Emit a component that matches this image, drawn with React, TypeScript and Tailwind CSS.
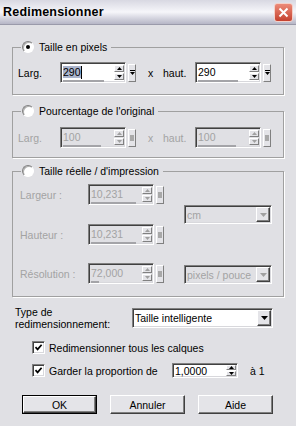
import React from "react";

const sunken =
  "border border-t-[#808080] border-l-[#808080] border-r-white border-b-white shadow-[inset_1px_1px_0_#404040,inset_-1px_-1px_0_#d8d8dc]";
const raised =
  "border border-t-white border-l-white border-r-[#404040] border-b-[#404040] shadow-[inset_-1px_-1px_0_#808080] bg-[#e4e4e8]";
const smallRaised =
  "border border-t-white border-l-white border-r-[#808080] border-b-[#808080] bg-[#e4e4e8]";

function Tri({ up, color }: { up?: boolean; color: string }) {
  return (
    <svg width="5" height="3" viewBox="0 0 5 3">
      <polygon points={up ? "0,3 2.5,0 5,3" : "0,0 5,0 2.5,3"} fill={color} />
    </svg>
  );
}

function Spin({ disabled, h = "h-[7px]" }: { disabled?: boolean; h?: string }) {
  const c = disabled ? "#a0a0a0" : "#000";
  return (
    <div className="mr-[1px] flex w-[10px] flex-col justify-center gap-[1px]">
      <span className={`flex items-center justify-center ${h} ${smallRaised}`}>
        <Tri up color={c} />
      </span>
      <span className={`flex items-center justify-center ${h} ${smallRaised}`}>
        <Tri color={c} />
      </span>
    </div>
  );
}

function SliderBtn({ disabled }: { disabled?: boolean }) {
  return (
    <span className={`flex h-[18px] w-[8px] items-center justify-center ${smallRaised}`}>
      {disabled ? (
        <span className="h-[6px] w-[4px] bg-[#a8a8a8]" />
      ) : (
        <svg width="5" height="6" viewBox="0 0 5 6">
          <rect x="0" y="0" width="5" height="1" fill="#000" />
          <polygon points="0,2 5,2 2.5,5" fill="#000" />
        </svg>
      )}
    </span>
  );
}

function SpinBox({
  value,
  disabled,
  selected,
  bar,
}: {
  value: string;
  disabled?: boolean;
  selected?: boolean;
  bar: string;
}) {
  return (
    <div className="flex items-center gap-[2px]">
      <div
        className={`flex h-[21px] w-[66px] ${sunken} ${
          disabled ? "bg-[#e0e0e4] text-[#a3a3a3]" : "bg-white"
        }`}
      >
        <div className="flex flex-1 flex-col pl-[2px] pt-[1px]">
          <div className="flex flex-1 items-center">
            {selected ? (
              <>
                <span className="bg-[#aab4cc]">{value}</span>
                <span className="h-[13px] w-[1px] bg-black" />
              </>
            ) : (
              <span>{value}</span>
            )}
          </div>
          <div className={`h-[2px] bg-[#a4a4a8] ${bar}`} />
        </div>
        <Spin disabled={disabled} />
      </div>
      <SliderBtn disabled={disabled} />
    </div>
  );
}

function Combo({
  value,
  w,
  h,
  disabled,
}: {
  value: string;
  w: string;
  h: string;
  disabled?: boolean;
}) {
  return (
    <div
      className={`flex ${w} ${h} ${sunken} ${
        disabled ? "bg-[#e0e0e4] text-[#a3a3a3]" : "bg-white"
      }`}
    >
      <span className="flex flex-1 items-center overflow-hidden whitespace-nowrap pl-[2px]">
        {value}
      </span>
      <span className={`my-[1px] mr-[1px] flex w-[14px] items-center justify-center ${raised}`}>
        <svg width="7" height="4" viewBox="0 0 7 4">
          <polygon points="0,0 7,0 3.5,4" fill={disabled ? "#a0a0a0" : "#000"} />
        </svg>
      </span>
    </div>
  );
}

function Radio({ checked }: { checked?: boolean }) {
  return (
    <span className="flex h-[12px] w-[12px] items-center justify-center rounded-full border border-t-[#808080] border-l-[#808080] border-r-white border-b-white bg-white shadow-[inset_1px_1px_0_#b0b0b0]">
      {checked && <span className="h-[4px] w-[4px] rounded-full bg-black" />}
    </span>
  );
}

function Check() {
  return (
    <span className={`flex h-[13px] w-[13px] items-center justify-center bg-white ${sunken}`}>
      <svg width="9" height="9" viewBox="0 0 9 9">
        <path d="M1.5 4.2 L3.6 6.4 L7.6 1.8" fill="none" stroke="#000" strokeWidth="1.7" />
      </svg>
    </span>
  );
}

function Group({
  label,
  checked,
  className,
  children,
}: {
  label: string;
  checked?: boolean;
  className: string;
  children: React.ReactNode;
}) {
  return (
    <fieldset className={`border border-[#a0a0a0] shadow-[1px_1px_0_#fff] ${className}`}>
      <legend className="ml-[8px] bg-[#e0e0e4] px-[1px]">
        <span className="flex items-center gap-[5px] pr-[3px]">
          <Radio checked={checked} />
          <span>{label}</span>
        </span>
      </legend>
      {children}
    </fieldset>
  );
}

function Btn({ label, def }: { label: string; def?: boolean }) {
  return (
    <span className={`flex h-[19px] w-[75px] ${def ? "border border-black" : ""}`}>
      <span className={`flex flex-1 items-center justify-center ${raised}`}>{label}</span>
    </span>
  );
}

export default function App() {
  return (
    <div className="h-[426px] w-[296px] overflow-hidden bg-[#e0e0e4] font-['Liberation_Sans',Arial,sans-serif] text-[10.5px] leading-[12px] text-black">
      {/* barre de titre */}
      <div className="flex h-[25px] items-center justify-between border-b border-[#9a9aaa] bg-gradient-to-b from-[#d8d8e2] via-[#f6f6fa] to-[#b6b6c6] pl-[3px] pr-[3px]">
        <span className="text-[12.5px] font-bold tracking-[0.2px]">Redimensionner</span>
        <span className="flex h-[19px] w-[19px] items-center justify-center rounded-[3px] border border-[#f4d0c8] bg-gradient-to-b from-[#ec8a78] to-[#c4402e]">
          <svg width="11" height="11" viewBox="0 0 11 11">
            <path d="M1.5 1.5L9.5 9.5M9.5 1.5L1.5 9.5" stroke="#fff" strokeWidth="2" />
          </svg>
        </span>
      </div>

      <div className="px-[12px]">
        <Group label="Taille en pixels" checked className="mt-[16px]">
          <div className="flex items-center pb-[11px] pl-[5px] pt-[9px]">
            <span className="w-[42px]">Larg.</span>
            <SpinBox value="290" selected bar="w-[41px]" />
            <span className="w-[27px] pl-[12px]">x</span>
            <span className="w-[32px]">haut.</span>
            <SpinBox value="290" bar="w-[40px]" />
          </div>
        </Group>

        <Group label="Pourcentage de l'original" className="mt-[10px]">
          <div className="flex items-center pb-[9px] pl-[5px] pt-[10px] text-[#a3a3a3]">
            <span className="w-[42px]">Larg.</span>
            <SpinBox value="100" disabled bar="w-[38px]" />
            <span className="w-[27px] pl-[12px]">x</span>
            <span className="w-[32px]">haut.</span>
            <SpinBox value="100" disabled bar="w-[38px]" />
          </div>
        </Group>

        <Group label="Taille réelle / d'impression" className="mt-[7px]">
          <div className="flex pb-[12px] pl-[7px] pt-[7px] text-[#a3a3a3]">
            <div className="flex w-[144px] flex-col">
              <div className="flex items-center">
                <span className="w-[68px]">Largeur :</span>
                <SpinBox value="10,231" disabled bar="w-[45px]" />
              </div>
              <div className="mt-[19px] flex items-center">
                <span className="w-[68px]">Hauteur :</span>
                <SpinBox value="10,231" disabled bar="w-[45px]" />
              </div>
              <div className="mt-[18px] flex items-center">
                <span className="w-[68px]">Résolution :</span>
                <SpinBox value="72,000" disabled bar="w-[8px]" />
              </div>
            </div>
            <div className="ml-[20px] flex flex-col">
              <div className="mt-[21px]">
                <Combo value="cm" w="w-[88px]" h="h-[19px]" disabled />
              </div>
              <div className="mt-[41px]">
                <Combo value="pixels / pouce" w="w-[88px]" h="h-[19px]" disabled />
              </div>
            </div>
          </div>
        </Group>

        <div className="mt-[9px] flex items-center">
          <span className="ml-[3px] w-[117px]">
            Type de
            <br />
            redimensionnement:
          </span>
          <Combo value="Taille intelligente" w="w-[141px]" h="h-[20px]" />
        </div>

        <div className="ml-[20px] mt-[11px] flex items-center gap-[4px]">
          <Check />
          <span>Redimensionner tous les calques</span>
        </div>

        <div className="ml-[20px] mt-[9px] flex items-center">
          <Check />
          <span className="w-[127px] pl-[4px]">Garder la proportion de</span>
          <div className={`flex h-[15px] w-[66px] bg-white ${sunken}`}>
            <span className="flex flex-1 items-center pl-[2px]">1,0000</span>
            <Spin h="h-[5px]" />
          </div>
          <span className="ml-[12px]">à 1</span>
        </div>

        <div className="ml-[10px] mt-[17px] flex gap-[13px]">
          <Btn label="OK" def />
          <Btn label="Annuler" />
          <Btn label="Aide" />
        </div>
      </div>
    </div>
  );
}
